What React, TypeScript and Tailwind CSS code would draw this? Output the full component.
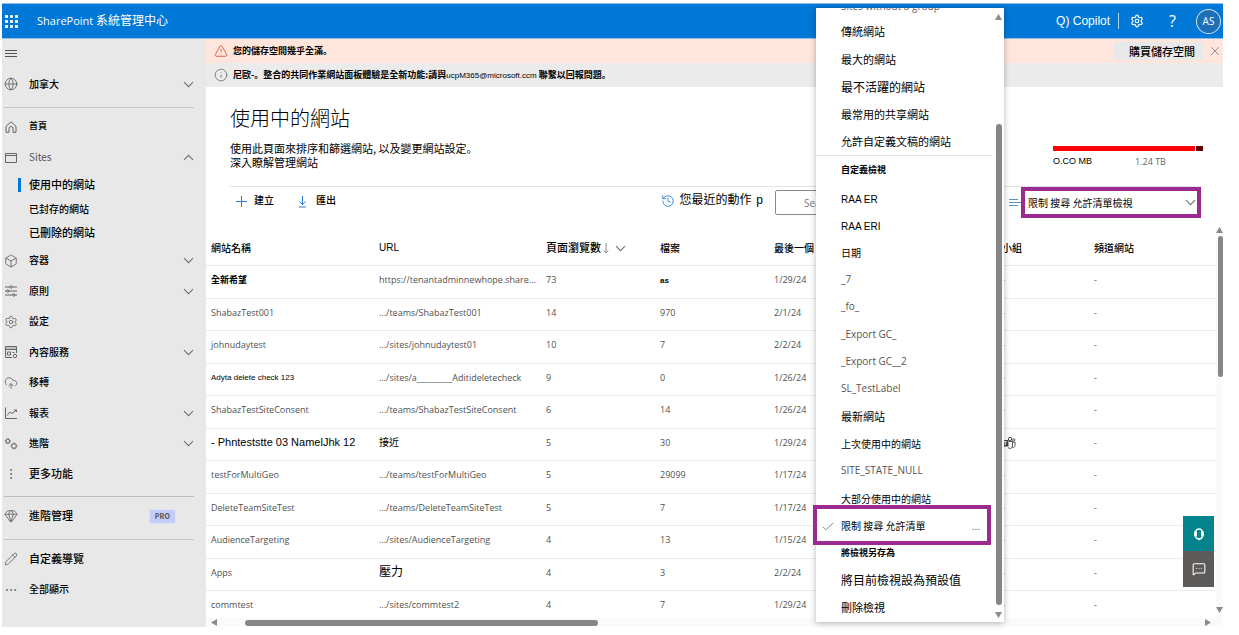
import type { ReactNode } from "react";
import {
  Globe,
  Box,
  Settings,
  CloudUpload,
  EllipsisVertical,
  Ellipsis,
  Gem,
  Pencil,
  TriangleAlert,
  Info,
  X,
  History,
  MessageSquareMore,
} from "lucide-react";

const LATIN = "font-['Open_Sans','Noto_Sans_CJK_TC',sans-serif]";
const ARIAL = "font-['Liberation_Sans','Noto_Sans_CJK_TC',sans-serif]";

const line = { fill: "none", stroke: "currentColor", strokeWidth: 1, viewBox: "0 0 14 14" };

const Chevron = ({ up = false }: { up?: boolean }) => (
  <svg viewBox="0 0 11 7" className="h-[7px] w-[11px] shrink-0 text-[#707070]" fill="none" stroke="currentColor" strokeWidth="1.1">
    <path d={up ? "M1 5.8 5.500 1.300 10 5.800" : "M1 1.200l4.500 4.500L10 1.200"} />
  </svg>
);
const MenuIcon = () => (
  <svg {...line} className="size-3.5"><path d="M1 3.500h12M1 6.500h12M1 9.500h12" /></svg>
);
const HomeIcon = () => (
  <svg {...line} className="size-3.5"><path d="M2 6.300 7 1.800l5 4.500v6H9V8.500a2 2 0 0 0-4 0v3.800H2z" /></svg>
);
const WindowIcon = () => (
  <svg {...line} className="size-3.5"><path d="M1.500 2.500h11v9h-11zM1.500 4.500h11" /></svg>
);
const SlidersIcon = () => (
  <svg {...line} className="size-3.5">
    <path d="M1 3h5M8.400 3H13M1 7h1.600M5 7h8M1 11h7.600M11 11h2" />
    <circle cx="7.200" cy="3" r="1.200" /><circle cx="3.800" cy="7" r="1.200" /><circle cx="9.800" cy="11" r="1.200" />
  </svg>
);
const ContentIcon = () => (
  <svg {...line} className="size-3.5">
    <path d="M8 12.500H1.500v-11h11V8M1.500 4.500h11M3.500 7h3v3h-3zM8.500 7.500h2" />
    <path d="M1.500 3h11" strokeOpacity="0.6" />
    <circle cx="11" cy="11" r="1.700" />
  </svg>
);
const ChartIcon = () => (
  <svg {...line} className="size-3.5"><path d="M1.500 1.500v11H13M3 9.500l3-3.500 2 1.500L12.500 4M10 4h2.500v2" /></svg>
);
const GearsIcon = () => (
  <svg {...line} className="size-3.5">
    <circle cx="3.800" cy="4.200" r="1.900" /><circle cx="3.800" cy="4.200" r="2.500" strokeDasharray="1 1" />
    <circle cx="10" cy="9" r="2.300" /><circle cx="10" cy="9" r="2.900" strokeDasharray="1 1" />
  </svg>
);
const PlusIcon = () => (
  <svg {...line} className="size-3.5 text-[#2b7cd3]"><path d="M7.500 2v11M2 7.500h11" /></svg>
);
const ExportIcon = () => (
  <svg {...line} className="size-3.5 text-[#2b7cd3]"><path d="M7.500 2v8.500M4.500 7.500l3 3 3-3M4 13h7" /></svg>
);
const CheckIcon = () => (
  <svg {...line} className="size-3"><path d="M1 8l3.500 3.500L13 3.500" /></svg>
);
const TeamsIcon = () => (
  <svg {...line} className="size-3.5 text-[#555]">
    <circle cx="8" cy="3" r="1.700" /><circle cx="11.700" cy="4" r="1.200" />
    <path d="M7 5.500h3.500v4.500a2.500 2.500 0 0 1-4.500 1.500M10.500 6H13v3.500a2 2 0 0 1-2.500 2" />
    <path d="M0 4h6.500v6.500H0z" fill="#444" stroke="none" /><path d="M1.700 5.700h3M3.200 5.700V9" stroke="#fff" />
  </svg>
);
const HeadsetIcon = () => (
  <svg viewBox="0 0 14 14" className="size-3.5" fill="none" stroke="#fff">
    <path d="M3.500 8V5.500a3.500 3.500 0 0 1 7 0V8" strokeWidth="1.600" />
    <path d="M3.500 4.500v5M10.500 4.500v5" strokeWidth="2.800" />
    <path d="M10.500 9.500c-.3 1.500-1.500 2.300-3 2.300M3.500 9.500c.5 1.500 1.500 2.300 3 2.300" strokeWidth="1.300" />
    <circle cx="7" cy="12" r="1.300" fill="#fff" stroke="none" />
  </svg>
);

function Arrow({ dir }: { dir: "up" | "down" | "left" | "right" }) {
  const d = {
    up: "M0 6 3.500 0 7 6z",
    down: "M0 1h7L3.500 7z",
    left: "M6 0v7L0 3.500z",
    right: "M1 0v7l6-3.500z",
  }[dir];
  return <svg viewBox="0 0 7 7" className="size-[7px] shrink-0" fill="#8a8a8a"><path d={d} /></svg>;
}

/** Full stop set at the lower left of its cell. */
const Stop = () => <span className="font-['Noto_Sans_CJK_JP',sans-serif]">。</span>;

type NavProps = { icon?: ReactNode; label: string; size?: string; chevron?: "up" | "down"; badge?: string };

function NavItem({ icon, label, size = "text-[10px]", chevron, badge }: NavProps) {
  return (
    <a href="#" className="flex h-full items-center">
      <span className="flex w-[25px] items-center text-[#666]">{icon}</span>
      <span className={`flex-1 pb-0.5 ${size}`}>{label}</span>
      {badge && (
        <span className="mr-[18px] border border-[#dfe4fb] bg-[#c3cdf7] px-[5px] text-[7px] leading-[13px] font-semibold tracking-wide text-[#555]">{badge}</span>
      )}
      {chevron && <Chevron up={chevron === "up"} />}
    </a>
  );
}

const ic = { className: "size-3.5", strokeWidth: 1.5 };

const mainNav: NavProps[] = [
  { icon: <Box {...ic} />, label: "容器", chevron: "down" },
  { icon: <SlidersIcon />, label: "原則", chevron: "down" },
  { icon: <Settings {...ic} />, label: "設定" },
  { icon: <ContentIcon />, label: "內容服務", chevron: "down" },
  { icon: <CloudUpload {...ic} />, label: "移轉" },
  { icon: <ChartIcon />, label: "報表", chevron: "down" },
  { icon: <GearsIcon />, label: "進階", chevron: "down" },
  { icon: <EllipsisVertical {...ic} />, label: "更多功能", size: "text-[11px]" },
];

function Sidebar() {
  return (
    <nav aria-label="導覽" className="w-[204px] shrink-0 bg-[#e8e8e8] pr-3 pl-0.5 font-medium text-black">
      <button aria-label="功能表" className="flex h-[30px] items-center text-[#555]"><MenuIcon /></button>
      <div className="h-[30px]"><NavItem icon={<Globe {...ic} />} label="加拿大" chevron="down" /></div>
      <hr className="mt-2 mb-1 border-[#c8c8c8]" />
      <div className="h-[30px]"><NavItem icon={<HomeIcon />} label="首頁" size="text-[9px]" /></div>
      <div className="h-[31px] font-normal text-[#555]"><NavItem icon={<WindowIcon />} label="Sites" chevron="up" /></div>
      <ul>
        <li className="flex h-6 items-center pl-3.5">
          <span className="mr-2 h-3.5 w-[3px] bg-[#0078d4]" />
          <a href="#" className="pb-0.5 text-[11px]">使用中的網站</a>
        </li>
        <li className="flex h-6 items-center pl-[25px]"><a href="#" className="pb-0.5 text-[10px]">已封存的網站</a></li>
        <li className="flex h-6 items-center pl-[25px]"><a href="#" className="pb-0.5 text-[11px]">已刪除的網站</a></li>
      </ul>
      <ul>
        {mainNav.map((n) => (
          <li key={n.label} className="odd:h-[31px] even:h-[30px]"><NavItem {...n} /></li>
        ))}
      </ul>
      <hr className="mt-[7px] mb-1 border-[#bdbdbd]" />
      <div className="h-[30px]"><NavItem icon={<Gem {...ic} />} label="進階管理" size="text-[11px]" badge="PRO" /></div>
      <hr className="mt-2 mb-1 border-[#c8c8c8]" />
      <div className="h-[30px]"><NavItem icon={<Pencil {...ic} />} label="自定義導覽" size="text-[11px]" /></div>
      <div className="h-[31px]"><NavItem icon={<Ellipsis {...ic} />} label="全部顯示" /></div>
    </nav>
  );
}

type Row = { name: ReactNode; url: ReactNode; views: string; files: ReactNode; date: string; team?: ReactNode };

const rows: Row[] = [
  { name: <span className="text-[9px] font-bold text-black">全新希望</span>, url: "https://tenantadminnewhope.share...", views: "73", files: <span className={`${ARIAL} text-[8px] font-bold text-black`}>as</span>, date: "1/29/24" },
  { name: "ShabazTest001", url: ".../teams/ShabazTest001", views: "14", files: "970", date: "2/1/24" },
  { name: "johnudaytest", url: ".../sites/johnudaytest01", views: "10", files: "7", date: "2/2/24" },
  { name: <span className={`${ARIAL} text-[8px] text-black`}>Adyta delete check 123</span>, url: ".../sites/a_________Aditideletecheck", views: "9", files: "0", date: "1/26/24" },
  { name: "ShabazTestSiteConsent", url: ".../teams/ShabazTestSiteConsent", views: "6", files: "14", date: "1/26/24" },
  { name: <span className={`${ARIAL} text-[11px] text-black`}>- Phnteststte 03 NamelJhk 12</span>, url: <span className="text-[10px] text-black">接近</span>, views: "5", files: "30", date: "1/29/24", team: <TeamsIcon /> },
  { name: "testForMultiGeo", url: ".../teams/testForMultiGeo", views: "5", files: "29099", date: "1/17/24" },
  { name: "DeleteTeamSiteTest", url: ".../teams/DeleteTeamSiteTest", views: "5", files: "7", date: "1/17/24" },
  { name: "AudienceTargeting", url: ".../sites/AudienceTargeting", views: "4", files: "13", date: "1/15/24" },
  { name: "Apps", url: <span className="text-[12px] text-black">壓力</span>, views: "4", files: "3", date: "2/2/24" },
  { name: "commtest", url: ".../sites/commtest2", views: "4", files: "7", date: "1/29/24" },
];

function SitesTable() {
  return (
    <div className="flex">
      <table className={`min-w-0 flex-1 table-fixed border-separate border-spacing-0 text-left text-[9px] leading-3 whitespace-nowrap text-[#505050] ${LATIN}`}>
        <colgroup>
          <col className="w-[168px]" />
          <col className="w-[167px]" />
          <col className="w-[114px]" />
          <col className="w-[114px]" />
          <col className="w-[228px]" />
          <col className="w-[92px]" />
          <col />
        </colgroup>
        <thead className="text-[10px] text-black [&_th]:h-[39px] [&_th]:border-b [&_th]:border-[#e8e8e8] [&_th]:pt-1 [&_th]:pl-[5px] [&_th]:font-medium">
          <tr>
            <th>網站名稱</th>
            <th className={ARIAL}>URL</th>
            <th>
              <span className="flex items-center">
                <span className="text-[11px]">頁面瀏覽數</span>
                <svg viewBox="0 0 6 12" className="ml-0.5 h-3 w-1.5" fill="none" stroke="#888"><path d="M3 1v10M.8 8.500 3 11l2.200-2.500" /></svg>
                <span className="ml-1.5"><Chevron /></span>
              </span>
            </th>
            <th>檔案</th>
            <th>最後一個</th>
            <th>小組</th>
            <th>頻道網站</th>
          </tr>
        </thead>
        <tbody className="[&_td]:border-b [&_td]:border-[#ededed] [&_td]:pb-1 [&_td]:pl-[5px]">
          {rows.map((r, i) => (
            <tr key={i} className="h-[33px] even:h-8 last:h-[27px] last:[&>td]:border-0 last:[&>td]:pb-0">
              <td>{r.name}</td>
              <td>{r.url}</td>
              <td>{r.views}</td>
              <td>{r.files}</td>
              <td>{r.date}</td>
              <td>{r.team ?? "-"}</td>
              <td>-</td>
            </tr>
          ))}
        </tbody>
      </table>
      <div className="flex w-[7px] flex-col items-end bg-[#fafafa] pb-[5px]">
        <Arrow dir="up" />
        <div className="mt-0.5 h-[141px] w-[5px] rounded-full bg-[#868686]" />
        <div className="flex-1" />
        <Arrow dir="down" />
      </div>
    </div>
  );
}

const views: { label: string; cls?: string; selected?: boolean }[] = [
  { label: "自定義檢視", cls: "text-[9px] font-bold" },
  { label: "RAA ER", cls: "pt-1 font-['Liberation_Sans',sans-serif] text-[10px]" },
  { label: "RAA ERI", cls: "pt-1 font-['Liberation_Sans',sans-serif] text-[10px]" },
  { label: "日期", cls: "text-[10px]" },
  { label: "_7", cls: "text-[10px] text-[#555] font-['Open_Sans',sans-serif]" },
  { label: "_fo_", cls: "text-[10px] text-[#555] font-['Open_Sans',sans-serif]" },
  { label: "_Export GC_", cls: "text-[10px] text-[#555] font-['Open_Sans',sans-serif]" },
  { label: "_Export GC__2", cls: "text-[10px] text-[#555] font-['Open_Sans',sans-serif]" },
  { label: "SL_TestLabel", cls: "text-[10px] text-[#555] font-['Open_Sans',sans-serif]" },
  { label: "最新網站", cls: "text-[11px]" },
  { label: "上次使用中的網站", cls: "text-[10px]" },
  { label: "SITE_STATE_NULL", cls: "text-[10px] text-[#555] font-['Open_Sans',sans-serif]" },
  { label: "大部分使用中的網站", cls: "text-[10px]" },
  { label: "限制 搜尋 允許清單", cls: "text-[10px]", selected: true },
  { label: "將檢視另存為", cls: "text-[9px] font-bold" },
  { label: "將目前檢視設為預設值", cls: "text-[12px]" },
  { label: "刪除檢視", cls: "text-[11px]" },
];

const builtIn = [
  { label: "Sites without a group", cls: "pt-1 text-[10px] text-[#666] font-['Open_Sans',sans-serif]" },
  { label: "傳統網站", cls: "text-[11px]" },
  { label: "最大的網站", cls: "text-[11px]" },
  { label: "最不活躍的網站", cls: "text-[12px]" },
  { label: "最常用的共享網站", cls: "text-[11px]" },
  { label: "允許自定義文稿的網站", cls: "text-[11px]" },
];

function ViewMenu() {
  return (
    <div className="absolute top-2 right-[235px] w-[188px] bg-white shadow-[0_1px_6px_rgba(0,0,0,0.3)]">
      <div className="flex h-[614px] overflow-hidden">
        <div role="menu" aria-label="檢視" className="-mt-[18px] flex-1 text-black">
          <ul className="border-b border-[#e6e6e6]">
            {builtIn.map((v) => (
              <li key={v.label} className="odd:h-7 even:h-[27px]">
                <button role="menuitem" className={`flex h-full w-full items-center pl-[25px] ${v.cls}`}>{v.label}</button>
              </li>
            ))}
          </ul>
          <ul>
            {views.map((v) => (
              <li key={v.label} className="h-[27px] nth-[3n+1]:h-7">
                <button role="menuitem" className={`flex h-full w-full items-center pr-[13px] ${v.cls}`}>
                  <span className="w-[25px] pl-1.5 text-[#777]">{v.selected && <CheckIcon />}</span>
                  <span className="flex-1 text-left">{v.label}</span>
                  {v.selected && <span className="text-[#666]">...</span>}
                </button>
              </li>
            ))}
          </ul>
        </div>
        <div className="flex w-[11px] flex-col items-center pt-[6px] pb-1">
          <Arrow dir="up" />
          <div className="mt-[103px] w-1.5 flex-1 rounded-full bg-[#868686]" />
          <div className="h-1.5" />
          <Arrow dir="down" />
        </div>
      </div>
      <div className="pointer-events-none absolute top-[497px] -left-[3px] h-10 w-[178px] border-4 border-[#9b2a92]" />
    </div>
  );
}

function Header() {
  return (
    <header className="flex h-9 items-center border-t border-b border-[#8fc1ea] bg-[#0078d7] text-white">
      <button aria-label="應用程式啟動器" className="ml-0.5 grid grid-cols-3 gap-0.5 p-px">
        {Array.from({ length: 9 }, (_, i) => <span key={i} className="size-[3px] bg-white/90" />)}
      </button>
      <h1 className="ml-[18px] pb-px text-xs"><span className={`${LATIN} text-[11px]`}>SharePoint</span> 系統管理中心</h1>
      <div className="ml-auto flex items-center">
        <button className={`${ARIAL} pb-px text-xs`}>Q) Copilot</button>
        <span className="ml-2 h-4 w-px bg-white/70" />
        <button aria-label="設定" className="ml-[11px]"><Settings className="size-3.5" strokeWidth={2} /></button>
        <button aria-label="說明" className={`${LATIN} ml-[25px] pb-px text-[16px]`}>?</button>
        <button aria-label="帳戶" className={`${LATIN} mr-0.5 ml-5 flex size-[25px] items-center justify-center rounded-full border border-white/80 bg-[#1d70b8] text-[10px]`}>AS</button>
      </div>
    </header>
  );
}

export default function App() {
  return (
    <div className="relative min-h-screen bg-white pt-[3px] pr-4 pb-2 pl-0.5 font-['Noto_Sans_CJK_TC',sans-serif]">
      <Header />
      <div className="flex">
        <Sidebar />
        <main className="flex min-w-0 flex-1 flex-col">
          <div className="flex h-6 items-center bg-[#ffe5dc] pr-px pl-2">
            <TriangleAlert className="size-3.5 text-[#d0583f]" strokeWidth={1.500} />
            <p className="ml-[5px] flex-1 text-[9px] font-bold text-black">您的儲存空間幾乎全滿<Stop /></p>
            <button className="h-[18px] bg-[#e8e8e8] pr-2 pl-[15px] text-[11px] leading-[16px] font-medium text-black">購買儲存空間</button>
            <button aria-label="關閉" className="ml-[5px] text-[#777]"><X className="size-3.5" strokeWidth={1.300} /></button>
          </div>
          <div className="flex h-6 items-center bg-[#ebebeb] pl-2">
            <Info className="size-3.5 text-[#777]" strokeWidth={1.500} />
            <p className="ml-[5px] text-[9px] whitespace-nowrap text-black">
              <span className="font-bold">尼歐-<Stop />整合的共同作業網站面板體驗是全新功能:請與</span>
              <span className={`${ARIAL} text-[8px]`}>ucpM365@microsoft.ccm</span> <span className="font-bold">聯繫以回報問題<Stop /></span>
            </p>
          </div>
          <div className="pr-5 pl-6">
            <div className="flex items-end justify-between">
              <div className="pt-[17px] pb-[17px] text-black">
                <h2 className="text-xl leading-7 font-light">使用中的網站</h2>
                <p className="mt-[9px] text-[11px] leading-[14px]">使用此頁面來排序和篩選網站, 以及變更網站設定<Stop /></p>
                <a href="#" className="block text-[11px] leading-[14px]">深入瞭解管理網站</a>
              </div>
              <div className="w-[150px] pb-[18px]">
                <div className="flex h-[5px] gap-px">
                  <div className="flex-1 bg-[#ff0000]" />
                  <div className="w-[7px] bg-[#5c0000]" />
                </div>
                <div className="mt-1 flex text-[9px]">
                  <span className={`${ARIAL} w-[82px] text-black`}>O.CO MB</span>
                  <span className={`${LATIN} text-[#666]`}>1.24 TB</span>
                </div>
              </div>
            </div>
            <div className="flex h-8 items-start border-t border-[#e3e3e3]">
              <button className="ml-1 flex h-[27px] items-center text-[10px] font-medium text-black">
                <PlusIcon /><span className="ml-1.5 pb-0.5">建立</span>
              </button>
              <button className="ml-[21px] flex h-[27px] items-center text-[10px] font-medium text-black">
                <ExportIcon /><span className="ml-[7px] pb-0.5">匯出</span>
              </button>
              <div className="flex flex-1 justify-end">
                <button className="flex h-[27px] items-center text-xs text-black">
                  <History className="mr-[5px] size-3.5 text-[#2b7cd3]" strokeWidth={1.500} />
                  <span className="pb-0.5">您最近的動作 <span className={`${ARIAL} ml-0.5`}>p</span></span>
                </button>
                <input
                  aria-label="搜尋網站"
                  placeholder="Search"
                  className={`${LATIN} mt-[3px] ml-3 h-[25px] w-[213px] rounded-xs border border-[#8a8a8a] pl-7 text-[10px] placeholder:text-[#777]`}
                />
                <svg viewBox="0 0 12 10" className="mt-[11px] ml-[21px] h-2.5 w-3" stroke="#5b93bd" strokeWidth="1.200"><path d="M0 1.500h9M0 4.500h12M0 7.500h9" /></svg>
              </div>
              <button aria-haspopup="menu" aria-expanded="true" className="mr-0.5 flex h-[31px] w-[180px] items-center border-4 border-[#9b2a92] pr-px pl-[3px] text-[10px] text-black">
                <span className="flex-1 text-left">限制 搜尋 允許清單檢視</span>
                <Chevron />
              </button>
            </div>
          </div>
          <div className="mt-[9px]">
            <SitesTable />
          </div>
          <div className="flex h-[9px] items-center bg-[#fafafa] pr-3 pl-[5px]">
            <Arrow dir="left" />
            <div className="ml-[27px] h-1.5 w-[353px] rounded-full bg-[#868686]" />
            <div className="flex-1" />
            <Arrow dir="right" />
          </div>
        </main>
      </div>
      <ViewMenu />
      <div className="absolute right-[25px] bottom-12 w-[31px]">
        <button aria-label="支援" className="flex h-[35px] w-full items-center justify-center bg-[#03838b]"><HeadsetIcon /></button>
        <button aria-label="意見反應" className="flex h-9 w-full items-center justify-center bg-[#5d5b59] text-white"><MessageSquareMore className="size-3.5" strokeWidth={1.800} /></button>
      </div>
    </div>
  );
}
